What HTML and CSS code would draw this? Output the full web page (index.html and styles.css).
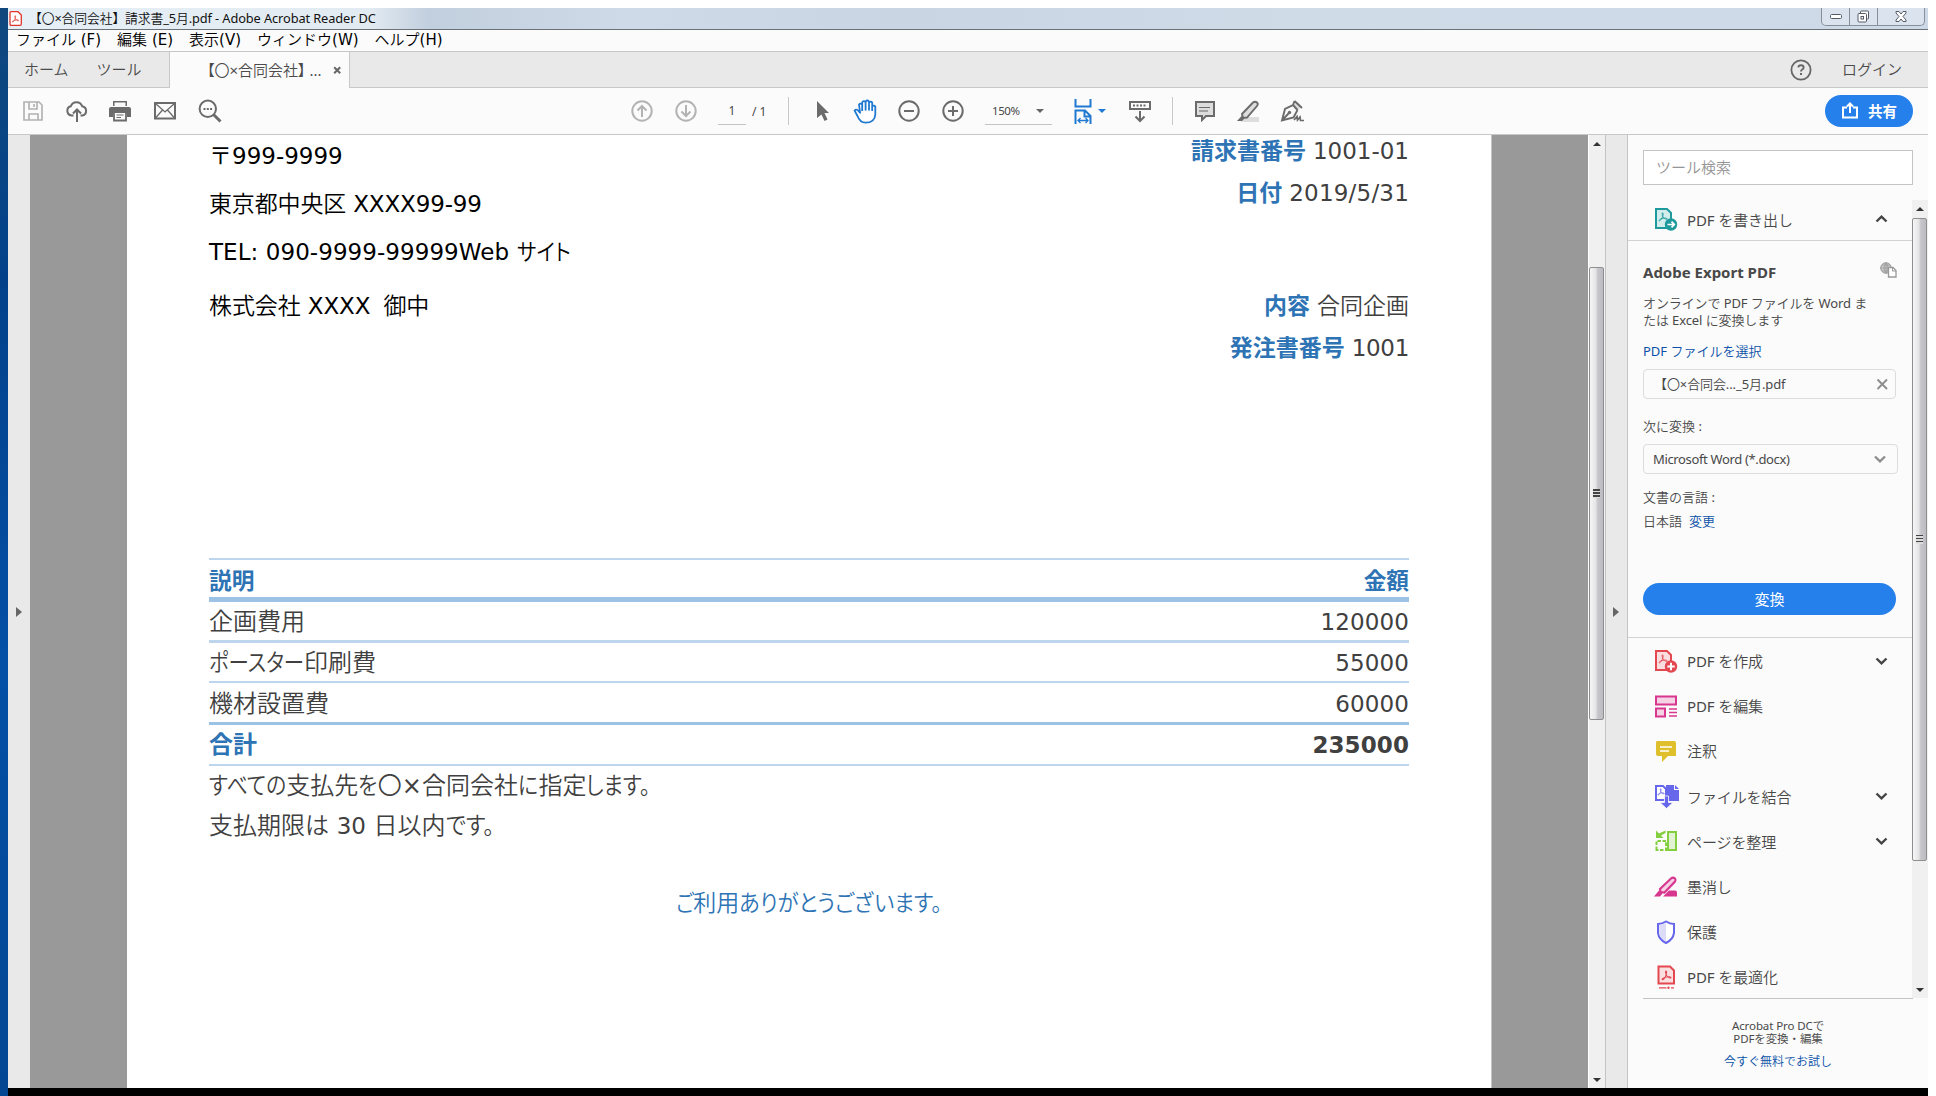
FILE: index.html
```html
<!DOCTYPE html>
<html lang="ja">
<head>
<meta charset="utf-8">
<title>請求書 - Adobe Acrobat Reader DC</title>
<link rel="stylesheet" href="styles.css">
</head>
<body>
<svg width="0" height="0" class="defs">
  <defs>
    <symbol id="acro" viewBox="0 0 12 12"><path d="M5.4 1C6.6 1 6.2 3.4 5.6 5.2 5 7 3.2 10.3 1.8 10.6 .4 10.6 1.6 8.6 5 7.8 8.400 7 10.900 7.200 10.900 8.200 10.900 9.400 8.300 8.700 6.400 6.300 4.900 4.300 4.500 1 5.400 1z" fill="none" stroke="currentColor" stroke-width="1.1"/></symbol>
    <symbol id="chev" viewBox="0 0 12 8"><path d="M1 1.500 6 6.300 11 1.500" fill="none" stroke="currentColor" stroke-width="2.400"/></symbol>
  </defs>
</svg>
<div class="desktop">
<div class="window">
  <header class="titlebar">
    <svg class="app-icon" width="13" height="15" viewBox="0 0 13 15"><path d="M1 2Q1 .7 2.200 .7H9L12.300 4V13Q12.300 14.300 11 14.300H2.200Q1 14.300 1 13z" fill="#fff" stroke="#e0362c" stroke-width="1.300"/><use href="#acro" x="2.500" y="4" width="8" height="8" color="#e0362c"/></svg>
    <span class="t-title">【〇×合同会社】請求書_5月.pdf - Adobe Acrobat Reader DC</span>
    <div class="winbtns">
      <span class="wb"><svg width="12" height="6" viewBox="0 0 12 6"><rect x=".5" y=".5" width="11" height="4" rx="1" fill="#fff" stroke="#555b66"/></svg></span>
      <span class="wb"><svg width="13" height="13" viewBox="0 0 13 13" fill="#fff" stroke="#555b66"><rect x="3.500" y="1" width="8" height="8" rx="1"/><rect x="1" y="3.500" width="8.500" height="8.500" rx="1"/><rect x="4" y="6.500" width="2.500" height="2.500"/></svg></span>
      <span class="wb wide"><svg width="12" height="11" viewBox="0 0 12 11"><path d="M1 .5H4L6 3 8 .5H11V2L8 5.500 11 9V10.500H8L6 8 4 10.500H1V9L4 5.500 1 2z" fill="#fff" stroke="#555b66"/></svg></span>
    </div>
  </header>
  <nav class="menubar">
    <span>ファイル (F)</span><span>編集 (E)</span><span>表示(V)</span><span>ウィンドウ(W)</span><span>ヘルプ(H)</span>
  </nav>
  <nav class="tabs">
    <div class="tabs-left"><span>ホーム</span><span>ツール</span></div>
    <div class="tab"><span>【〇×合同会社】 ...</span><svg width="9" height="9" viewBox="0 0 9 9"><path d="M1.200 1.200 7.200 7.200M7.200 1.200 1.200 7.200" stroke="#666" stroke-width="2"/></svg></div>
    <div class="tabs-right">
      <svg width="22" height="22" viewBox="0 0 22 22"><circle cx="11" cy="11" r="9.600" fill="none" stroke="#666" stroke-width="1.800"/><path d="M8.300 8.400Q8.500 6.300 11 6.300 13.600 6.300 13.600 8.400 13.600 9.700 12.200 10.500 11 11.200 11 12.600" fill="none" stroke="#666" stroke-width="1.900"/><rect x="10" y="14" width="2" height="2" fill="#666"/></svg>
      <span>ログイン</span>
    </div>
  </nav>
  <div class="toolbar">
    <div class="group g1">
      <svg width="22" height="22" viewBox="0 0 22 22" fill="none" stroke="#b3b3b3" stroke-width="1.700"><path d="M2 2H17L20 5V20H2z"/><path d="M7 2V9H15V2M7 20V14H16V20" /><path d="M12 4V7"/></svg>
      <svg width="24" height="22" viewBox="0 0 24 22" fill="none" stroke="#6b6b6b" stroke-width="2"><path d="M8.500 15.500H6.500A4.700 4.700 0 0 1 5.800 6.300 6 6 0 0 1 17.200 6.300 4.700 4.700 0 0 1 17.500 15.500H15.500"/><path d="M12 22V10M8 13.500 12 9.500 16 13.500"/></svg>
      <svg class="print" width="24" height="22" viewBox="0 0 24 22"><path d="M5 1H19V6H5zM3 7H21Q23 7 23 9V17H19V13H5V17H1V9Q1 7 3 7z" fill="#6b6b6b"/><path d="M6.500 2.500H17.500V7H6.500z" fill="#fbfbfb"/><path d="M6 12H18V20.500H6z" fill="#fbfbfb" stroke="#6b6b6b" stroke-width="1.800"/><path d="M8.500 15H15.500M8.500 17.500H13" stroke="#6b6b6b" stroke-width="1.200"/></svg>
      <svg width="24" height="20" viewBox="0 0 24 20" fill="none" stroke="#6b6b6b"><rect x="2" y="2" width="20" height="15.500" stroke-width="2"/><path d="M2.500 2.500 12 11 21.500 2.500M2.500 17 9.500 9M21.500 17 14.500 9" stroke-width="1.300"/></svg>
      <svg width="24" height="24" viewBox="0 0 24 24"><circle cx="9.800" cy="9.800" r="8.200" fill="none" stroke="#6b6b6b" stroke-width="2"/><path d="M15.500 15.500 22.500 22.500" stroke="#6b6b6b" stroke-width="3"/><path d="M5.500 10h2M8.800 10h2M12.100 10h2" stroke="#6b6b6b" stroke-width="2"/></svg>
    </div>
    <div class="group g2">
      <svg width="22" height="22" viewBox="0 0 22 22" fill="none" stroke="#b3b3b3" stroke-width="2"><circle cx="11" cy="11" r="9.700"/><path d="M11 17V6M6.500 10.500 11 6 15.500 10.500"/></svg>
      <svg width="22" height="22" viewBox="0 0 22 22" fill="none" stroke="#b3b3b3" stroke-width="2"><circle cx="11" cy="11" r="9.700"/><path d="M11 5V16M6.500 11.500 11 16 15.500 11.500"/></svg>
      <span class="pageno">1</span><span class="total">/ 1</span>
    </div>
    <i class="sep"></i>
    <div class="group g3">
      <svg width="14" height="22" viewBox="0 0 14 22"><path d="M1 1 13 13H8.500L11.500 19.500 8.500 21 5.500 14.500 1 18z" fill="#6b6b6b"/></svg>
      <svg width="24" height="25" viewBox="0 0 24 25"><path d="M7.200 14 4.500 11Q2.800 10 1.600 11.600L4.500 17Q7 23.700 12.500 23.700 21.800 23.700 22.300 15.500V7.500Q21 5.800 19.200 7.500V12M19.200 12V3.600Q17.800 1.800 16 3.600V11.500M16 11.500V2.500Q14.300 .5 12.600 2.500V11.500M12.600 11.500V3.200Q10.800 1.200 9.200 3.200V12M9.200 5.500Q7.400 3.600 6 5.500L7.200 14.500" fill="#fff" stroke="#1f79d2" stroke-width="1.800" stroke-linejoin="round"/></svg>
      <svg width="22" height="22" viewBox="0 0 22 22" fill="none" stroke="#6b6b6b" stroke-width="2"><circle cx="11" cy="11" r="9.700"/><path d="M6 11H16"/></svg>
      <svg width="22" height="22" viewBox="0 0 22 22" fill="none" stroke="#6b6b6b" stroke-width="2"><circle cx="11" cy="11" r="9.700"/><path d="M6 11H16M11 6V16"/></svg>
      <span class="zoom"><span>150%</span><i class="caret"></i></span>
      <svg width="18" height="25" viewBox="0 0 18 25" fill="none" stroke="#1f79d2" stroke-width="2"><path d="M1.500 0V7.500H16.500V0M1.500 25V11.500H11L16.500 17V25M10.500 12V17.500H16"/><path d="M4.500 21.500H13.500M6.500 19 4 21.500 6.500 24M11.500 19 14 21.500 11.500 24" stroke-width="1.300"/></svg>
      <i class="caret blue"></i>
      <svg width="24" height="23" viewBox="0 0 24 23" fill="none" stroke="#6b6b6b" stroke-width="2"><rect x="2" y="2" width="20" height="7"/><path d="M5 5.500H19" stroke-dasharray="2 1.500"/><path d="M12 11V21M7.500 16.500 12 21 16.500 16.500"/></svg>
    </div>
    <i class="sep"></i>
    <div class="group g4">
      <svg width="22" height="22" viewBox="0 0 22 22"><path d="M2 2H20V16H12L8 20V16H2z" fill="#ddd" stroke="#6b6b6b" stroke-width="2"/><path d="M5 7.500H16M5 11H14" stroke="#6b6b6b" stroke-width="1.200"/></svg>
      <svg width="24" height="22" viewBox="0 0 24 22"><path d="M8 17H23V22H5z" fill="#ddd"/><path d="M6 14 17 2.500Q19 .8 21 2.500 22.500 4 21 6L11 17.500 7 18z" fill="#ddd" stroke="#6b6b6b" stroke-width="1.900"/><path d="M5.500 16 8.500 18.500 6 21H1z" fill="#6b6b6b"/></svg>
      <svg width="25" height="23" viewBox="0 0 25 23"><path d="M13 5 17 1.500 22 6.500 18 10z" fill="#ddd"/><path d="M14.500 1 13 5 5 9 2 20.500 13.500 17.500 17.500 10M13 5 17.500 10M2 20.500 8.500 13.500M14.500 1 22 8" fill="none" stroke="#6b6b6b" stroke-width="1.900"/><circle cx="9.500" cy="12.500" r="1.700" fill="#6b6b6b"/><path d="M14 20 17 16.500 17.500 20 20 17 20.500 20.500H24" fill="none" stroke="#6b6b6b" stroke-width="1.700"/></svg>
    </div>
    <button class="share"><svg width="16" height="17" viewBox="0 0 16 17" fill="none" stroke="#fff" stroke-width="2"><path d="M5 5.500H1V15.500H15V5.500H11M8 11V2M5 4.500 8 1.500 11 4.500"/></svg><span>共有</span></button>
  </div>
  <main class="content">
    <div class="strip left"><i class="tri"></i></div>
    <div class="canvas">
      <article class="page">
        <section class="head">
          <div class="addr">
            <p class="a1">〒999-9999</p>
            <p class="a2">東京都中央区 XXXX99-99</p>
            <p class="a3">TEL: 090-9999-99999Web <span class="k k3">サイト</span></p>
            <p class="a4">株式会社 XXXX<span class="narrow">　</span>御中</p>
          </div>
          <div class="meta">
            <p class="b1"><b>請求書番号</b><span>1001-01</span></p>
            <p class="b2"><b>日付</b><span>2019/5/31</span></p>
            <p class="b3"><b>内容</b><span>合同企画</span></p>
            <p class="b4"><b>発注書番号</b><span>1001</span></p>
          </div>
        </section>
        <section class="items">
          <div class="row r-head"><b>説明</b><b>金額</b></div>
          <div class="row r1"><span>企画費用</span><span class="num">120000</span></div>
          <div class="row r2"><span><span class="k k5">ポースター</span>印刷費</span><span class="num">55000</span></div>
          <div class="row r3"><span>機材設置費</span><span class="num">60000</span></div>
          <div class="row r4"><b>合計</b><strong class="num">235000</strong></div>
        </section>
        <p class="note"><span class="k k4">すべての</span>支払先<span class="k k1">を</span>〇×合同会社<span class="k k1">に</span>指定<span class="k k4">します。</span></p>
        <p class="note">支払期限は <span class="num">30</span> 日以内<span class="k k3">です。</span></p>
        <p class="thanks"><span class="k k1">ご</span>利用<span class="k k11">ありがとうございます。</span></p>
      </article>
    </div>
    <div class="scroll doc"><i class="up"></i><div class="thumb"><i class="grip"></i></div><i class="down"></i></div>
    <div class="strip right"><i class="tri"></i></div>
    <aside class="pane">
      <div class="search">ツール検索</div>
      <div class="panebody">
        <div class="list">
          <div class="item first"><svg width="24" height="24" viewBox="0 0 24 24"><path d="M2 2H13L17 6V21H2z" fill="#d3ecec" stroke="#1f9a9c" stroke-width="2"/><use href="#acro" x="4" y="5" width="10" height="10" color="#1f9a9c"/><circle cx="17" cy="17.500" r="6.200" fill="#1f9a9c"/><path d="M13.500 17.500H20M17.500 14.700 20.300 17.500 17.500 20.300" fill="none" stroke="#fff" stroke-width="1.700"/></svg><span>PDF を書き出し</span><svg class="chev up-chev" width="13" height="8"><use href="#chev"/></svg></div>
          <div class="export">
            <div class="ex-head"><b>Adobe Export PDF</b><svg width="17" height="16" viewBox="0 0 17 16"><circle cx="6" cy="6" r="5.300" fill="#ccc" stroke="#999"/><path d="M.7 6H11M6 .7V11M2 3H10M2 9H10M6 1Q2 6 6 11M6 1Q10 6 6 11" stroke="#999" fill="none" stroke-width=".8"/><path d="M8.500 5.500H13L16 8.500V15H8.500z" fill="#fff" stroke="#999" stroke-width="1.300"/><path d="M12.500 5.500V9H16" fill="none" stroke="#999"/></svg></div>
            <p class="desc"><span>オンラインで PDF ファイルを Word ま</span><br><span>たは Excel に変換します</span></p>
            <p class="link pick">PDF ファイルを選択</p>
            <div class="field file"><span>【〇×合同会..._5月.pdf</span><svg width="13" height="13" viewBox="0 0 13 13"><path d="M1.500 1.500 11 11M11 1.500 1.500 11" stroke="#8e8e8e" stroke-width="2"/></svg></div>
            <p class="next">次に変換 :</p>
            <div class="field select"><span>Microsoft Word (*.docx)</span><svg class="chev" width="12" height="8"><use href="#chev"/></svg></div>
            <p class="lang1">文書の言語 :</p>
            <p class="lang2"><span>日本語</span><span class="link">変更</span></p>
            <button class="convert">変換</button>
          </div>
          <div class="tools">
            <div class="item"><svg width="24" height="24" viewBox="0 0 24 24"><path d="M2 2H13L17 6V21H2z" fill="#fadfe0" stroke="#e34850" stroke-width="2"/><use href="#acro" x="4" y="5" width="10" height="10" color="#e34850"/><circle cx="17" cy="17.500" r="6.200" fill="#e34850"/><path d="M13.300 17.500H20.700M17 13.800V21.200" stroke="#fff" stroke-width="2"/></svg><span>PDF を作成</span><svg class="chev" width="13" height="8"><use href="#chev"/></svg></div>
            <div class="item"><svg width="24" height="24" viewBox="0 0 24 24" fill="#f5d3e5" stroke="#d83790" stroke-width="2"><rect x="2" y="2.500" width="20" height="8"/><rect x="2" y="14.500" width="9" height="8"/><path d="M15 15H23M15 18.500H23M15 22H23" stroke-width="1.300"/></svg><span>PDF を編集</span></div>
            <div class="item"><svg width="24" height="24" viewBox="0 0 24 24"><path d="M3 2H20Q22 2 22 4V17H14L8 23V17H4Q2 17 2 15V4Q2 2 3 2z" fill="#dfbf2b"/><path d="M6 8H18M6 12H15" stroke="#fff" stroke-width="1.500"/></svg><span>注釈</span></div>
            <div class="item"><svg class="combine" width="25" height="25" viewBox="0 0 25 25"><path d="M12 1H20V6H25V17H12z" fill="#6767ec"/><path d="M21 1 25 5H21z" fill="#6767ec"/><path d="M2 2H9L12 5V16H2z" fill="#fff" stroke="#6767ec" stroke-width="2"/><use href="#acro" x="3" y="4" width="8" height="8" color="#6767ec"/><path d="M10.500 12H14.500V18.500H19L12.500 24.500 6 18.500H10.500z" fill="#6767ec" stroke="#fbfbfb" stroke-width=".8"/></svg><span>ファイルを結合</span><svg class="chev" width="13" height="8"><use href="#chev"/></svg></div>
            <div class="item"><svg width="24" height="24" viewBox="0 0 24 24"><rect x="14" y="3" width="8" height="18" fill="#e2f3d4" stroke="#84cf3f" stroke-width="2"/><path d="M2.500 21V12H12V21z" fill="none" stroke="#84cf3f" stroke-width="2" stroke-dasharray="3.500 1.500"/><path d="M2 1.500V9H9.500L7 6.500 11.500 4V1.500L5 4.500z" fill="#84cf3f"/></svg><span>ページを整理</span><svg class="chev" width="13" height="8"><use href="#chev"/></svg></div>
            <div class="item"><svg width="24" height="24" viewBox="0 0 24 24"><path d="M6 14 17 3.500Q19 1.800 21 3.500 22 5 21 6.500L10.500 17.500 6.500 17z" fill="#f5d3e5" stroke="#d83790" stroke-width="2.200"/><path d="M5 15.500 8.500 18.500 6 21.500H0zM15 15.500H21Q23 15.500 23 17.500V21.500H9z" fill="#d83790"/></svg><span>墨消し</span></div>
            <div class="item"><svg width="24" height="24" viewBox="0 0 24 24"><path d="M12 1.500Q16 4 20 4V13Q19 19.500 12 23 5 19.500 4 13V4Q8 4 12 1.500z" fill="#fff" stroke="#6767ec" stroke-width="2"/><path d="M12 3Q8.500 5 5.200 5V13Q6 18.500 12 21.500z" fill="#dcdcf8"/></svg><span>保護</span></div>
            <div class="item"><svg width="24" height="24" viewBox="0 0 24 24"><path d="M5 1.500H16L20 5.500V18.500H4.500V1.500z" fill="#fadfe0" stroke="#e34850" stroke-width="2"/><use href="#acro" x="7" y="5" width="11" height="11" color="#e34850"/><path d="M5 22.800H12.500M17 22.800H20" stroke="#e34850" stroke-width="1.300"/><circle cx="14.500" cy="22.700" r="1.200" fill="#e34850"/></svg><span>PDF を最適化</span></div>
          </div>
        </div>
        <div class="scroll side"><i class="up"></i><div class="thumb"><i class="grip"></i></div><i class="down"></i></div>
      </div>
      <div class="promo"><span class="small">Acrobat Pro DCで</span><span class="small">PDFを変換・編集</span><span class="link trial">今すぐ無料でお試し</span></div>
    </aside>
  </main>
</div>
</div>
</body>
</html>
```
FILE: styles.css
```css
* { box-sizing: border-box; }
html, body { margin: 0; height: 1096px; overflow: hidden; background: #fff; }
body { font-family: "Noto Sans", "Noto Sans CJK JP DemiLight", "Noto Sans CJK JP", sans-serif; font-weight: 400; color: #484848; }
p { margin: 0; white-space: nowrap; }
.defs { position: absolute; }
svg { flex: none; display: block; }
span, b { white-space: nowrap; }
.desktop { margin-top: 8px; height: 1088px; padding-left: 8px; width: 1928px; background: linear-gradient(#10487e, #02418a 25%, #0350a6 60%, #034793); }
.window { width: 1920px; height: 1088px; background: #fbfbfb; border-bottom: 8px solid #000; display: flex; flex-direction: column; }

/* title bar and menus */
.titlebar { height: 22px; flex: none; border-bottom: 1px solid #6b7277; background: linear-gradient(90deg, #e6eff5 0, #e3ebf2 360px, #c2cfde 420px, #cedae7 620px, #c9d5e3 900px, #cfdbe7 1300px, #cdd9e7); display: flex; align-items: flex-start; font-size: 12.800px; letter-spacing: -.1px; line-height: 21px; color: #111; }
.app-icon { margin: 3px 0 0 1px; }
.t-title { margin-left: 7px; }
.winbtns { margin-left: auto; margin-right: 3px; height: 18px; display: flex; border: 1px solid #868f9b; border-top: 0; border-radius: 0 0 5px 5px; background: #dbe4ee; }
.wb { width: 28px; display: flex; justify-content: center; align-items: center; border-right: 1px solid #868f9b; }
.wb.wide { width: 46px; border: 0; }

.menubar { height: 22px; flex: none; border-bottom: 1px solid #c8c8c8; display: flex; padding-left: 8px; gap: 16px; font: 400 15px/20px "DejaVu Sans", "Noto Sans CJK JP DemiLight", "Noto Sans CJK JP", sans-serif; color: #000; }
.tabs { height: 36px; flex: none; display: flex; font-size: 15px; line-height: 35px; background: #e9e9e9; color: #4b4b4b; }
.tabs-left { width: 161px; padding-left: 16px; display: flex; gap: 28px; border-bottom: 1px solid #c8c8c8; }
.tab { width: 181px; border: solid #c8c8c8; border-width: 0 1px; background: #fbfbfb; display: flex; align-items: center; padding-left: 37px; font-feature-settings: "palt"; }
.tab svg { margin-left: 11px; }
.tabs-right { flex: 1; display: flex; justify-content: flex-end; align-items: center; padding-right: 26px; gap: 30px; border-bottom: 1px solid #c8c8c8; }

/* toolbar */
.toolbar { height: 47px; flex: none; border-bottom: 1px solid #c8c8c8; display: flex; align-items: center; font-size: 12px; }
.group { display: flex; align-items: center; }
.g1 { gap: 21px; padding-left: 14px; width: 623px; }
.print { margin-left: -2px; }
.g2 { gap: 22px; width: 157px; }
.pageno { width: 28px; height: 27px; line-height: 25px; border-bottom: 1px solid #c4c4c4; text-align: center; margin-left: -1px; }
.total { margin-left: -16px; }
.sep { width: 1px; height: 28px; background: #c8c8c8; }
.g3 { padding-left: 27px; width: 383px; }
.g3 > svg:nth-of-type(2) { margin-left: 23px; }
.g3 > svg:nth-of-type(3) { margin-left: 21px; }
.g3 > svg:nth-of-type(4) { margin-left: 22px; }
.zoom { width: 67px; height: 27px; margin-left: 21px; display: flex; align-items: center; border-bottom: 1px solid #c4c4c4; padding-left: 7px; font-size: 11.500px; letter-spacing: -.4px; }
.caret { border: 4px solid transparent; border-top-color: #666; border-bottom: 0; }
.zoom .caret { margin-left: auto; margin-right: 8px; }
.g3 > svg:nth-of-type(5) { margin-left: 22px; }
.caret.blue { border-top-color: #1f79d2; margin-left: 6px; }
.g3 > svg:nth-of-type(6) { margin-left: 22px; }
.g4 { padding-left: 21px; gap: 20px; }
.share { margin-left: auto; margin-right: 15px; width: 88px; height: 32px; border: 0; border-radius: 16px; background: #2680eb; color: #fff; font: bold 14.500px "Noto Sans CJK JP", sans-serif; display: flex; align-items: center; padding: 0 0 2px 17px; gap: 10px; }

/* document */
.content { flex: 1; display: flex; min-height: 0; }
.strip { flex: none; background: #e9e9e9; display: flex; align-items: center; }
.strip.left { width: 22px; padding-left: 8px; }
.strip.right { width: 23px; border: solid #c4c4c4; border-width: 0 1px; padding-left: 7px; }
.tri { border: 5.500px solid transparent; border-left: 6px solid #666; border-right: 0; }
.canvas { width: 1558px; flex: none; background: #999; padding-left: 97px; }
.page { width: 1365px; height: 100%; background: #fff; border-right: 1px solid #c4c4c4; padding: 0 82px; color: #404040; font: 400 24px/40px "DejaVu Sans", "Noto Sans CJK JP DemiLight", "Noto Sans CJK JP Light", "Noto Sans CJK JP", sans-serif; }
.page b, .page strong { font-weight: 700; }
.page b { color: #2e74b5; font-family: "DejaVu Sans", "Noto Sans CJK JP", sans-serif; }
.head { display: flex; justify-content: space-between; height: 423px; }
.addr { color: #000; font-size: 23px; }
.addr p { height: 40px; }
.a1 { margin-top: 1px; }
.a2, .a3 { margin-top: 8px; }
.a2 { letter-spacing: -.150px; }
.a3 { letter-spacing: .060px; }
.a4 { margin-top: 14px; letter-spacing: -.100px; }
.narrow { letter-spacing: -10px; }
.k { display: inline-block; line-height: 1; transform: scaleX(.87); transform-origin: 0 50%; font-feature-settings: "palt"; }
.k1 { margin-right: -.110em; }
.k3 { margin-right: -.250em; transform: scaleX(.9); }
.k4 { margin-right: -.480em; }
.k5 { margin-right: -.700em; transform: scaleX(.85); }
.k11 { margin-right: -.650em; transform: scaleX(.93); }
.meta { font-size: 23px; }
.meta p { display: flex; justify-content: flex-end; gap: 7px; height: 40px; }
.meta p.b1 { margin-top: -4px; }
.b2 { margin-top: 2px; }
.b2 span { letter-spacing: .2px; }
.b3 { margin-top: 73px; }
.b4 { margin-top: 2px; }
.b4 span { letter-spacing: -.3px; }
.row { display: flex; justify-content: space-between; border-bottom: 2px solid #bdd6ee; line-height: 40px; }
.r-head { border-top: 2px solid #bdd6ee; border-bottom: 5px solid #9cc2e5; height: 44px; line-height: 42px; font-size: 22.700px; }
.r1 { height: 41px; border-bottom-width: 3px; }
.r2 { height: 40px; }
.r3 { height: 42px; border-bottom: 3px solid #9cc2e5; line-height: 42px; }
.r4 { height: 41px; line-height: 41px; }
.num { font-size: 23px; }
.row .num { letter-spacing: .1px; }
.note { height: 40px; }
.thanks { margin-top: 37px; text-align: center; color: #2e74b5; font-size: 23px; }

/* scrollbars */
.scroll { flex: none; background: #f0f0f0; display: flex; flex-direction: column; align-items: center; }
.scroll .up { border: 4px solid transparent; border-bottom: 4px solid #333; border-top: 0; }
.scroll .down { border: 4px solid transparent; border-top: 4px solid #333; border-bottom: 0; margin-top: auto; }
.thumb { width: 15px; border: 1px solid #8e8e8e; border-radius: 2px; background: linear-gradient(90deg, #f6f6f6, #e4e4e6 45%, #c5c5ca 60%, #bcbcc2); display: flex; align-items: center; justify-content: center; }
.grip { width: 7px; height: 9px; background: repeating-linear-gradient(#444 0 1.500px, #ddd 1.500px 3px); }
.doc { width: 17px; border-left: 1px solid #fff; padding: 7px 1px 6px 0; }
.doc .thumb { margin-top: 121px; height: 453px; }
.side { width: 16px; padding: 7px 1px 6px 0; }
.side .thumb { margin-top: 7px; height: 643px; }

/* tools pane */
.pane { width: 300px; flex: none; padding-top: 15px; }
.search { margin-left: 15px; width: 270px; height: 35px; border: 1px solid #c4c4c4; background: #fff; color: #959595; font-size: 15px; line-height: 33px; padding-left: 12px; }
.panebody { display: flex; margin-top: 15px; height: 798px; }
.list { width: 284px; overflow: hidden; }
.item { height: 45.200px; display: flex; align-items: center; padding-left: 26px; font-size: 15px; }
.item span { margin-left: 9px; letter-spacing: -.1px; }
.combine { margin-right: -1px; }
.chev { margin-left: auto; margin-right: 24px; color: #444; }
.up-chev { transform: scaleY(-1); }
.item.first { height: 41px; border-bottom: 1px solid #d2d2d2; padding-bottom: 2px; }
.export { height: 397px; border-bottom: 1px solid #d2d2d2; padding: 18px 0 0 15px; font-size: 13px; line-height: 17px; }
.ex-head { display: flex; height: 26px; line-height: 26px; font-size: 15px; }
.ex-head svg { margin: 3px 15px 0 auto; }
.desc { margin-top: 10px; letter-spacing: -.1px; }
.link { color: #0a50a8; }
.pick { margin-top: 14px; }
.field { border: 1px solid #dcdcdc; border-radius: 4px; display: flex; align-items: center; height: 30px; }
.file { width: 253px; margin-top: 9px; padding: 0 6px 0 10px; justify-content: space-between; letter-spacing: -.1px; }
.next { margin-top: 19px; }
.select { width: 255px; margin-top: 9px; padding-left: 9px; letter-spacing: -.350px; }
.select .chev { margin-right: 11px; color: #8e8e8e; }
.lang1 { margin-top: 15px; }
.lang2 { margin-top: 7px; display: flex; gap: 7px; }
.convert { display: block; margin-top: 53px; width: 253px; height: 32px; border: 0; border-radius: 16px; background: #2680eb; color: #fff; font: 400 15px "Noto Sans CJK JP", sans-serif; padding: 0 0 2px; }
.promo { margin-left: 15px; width: 270px; border-top: 1px solid #c4c4c4; padding-top: 21px; display: flex; flex-direction: column; align-items: center; font-size: 12px; line-height: 12.500px; }
.small { font-size: 11.500px; letter-spacing: -.1px; }
.trial { margin-top: 11px; }
```
